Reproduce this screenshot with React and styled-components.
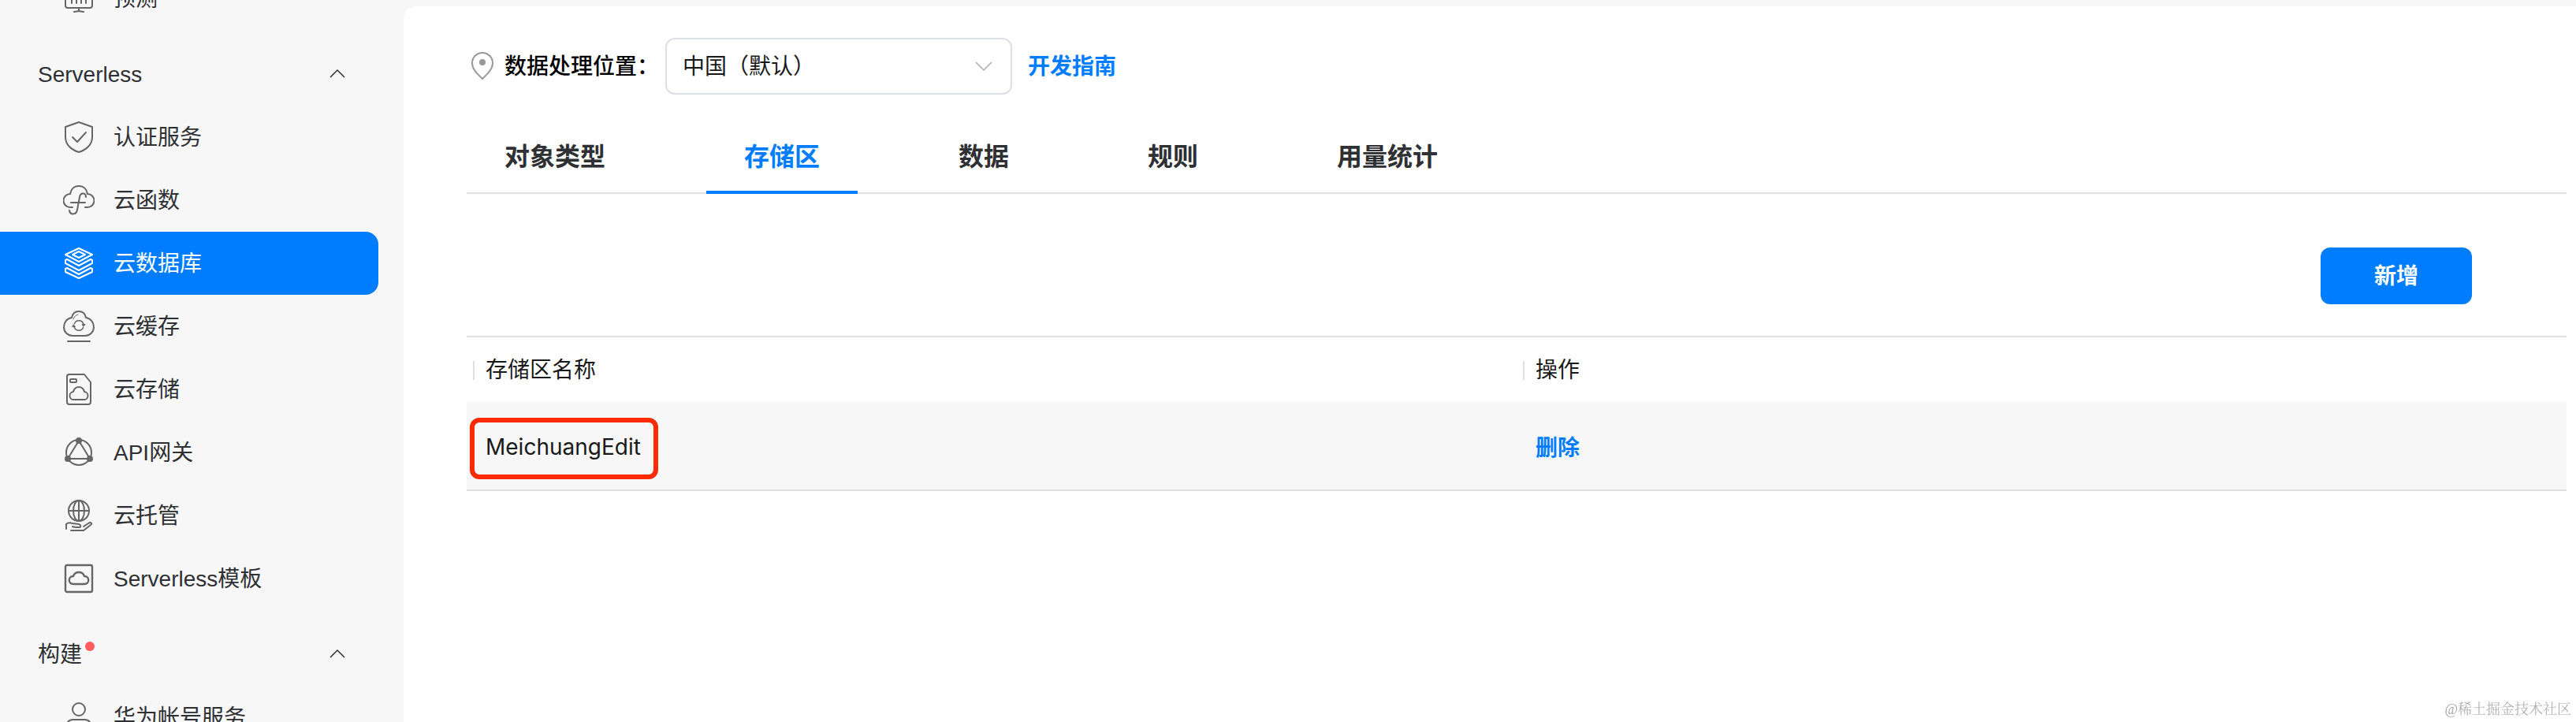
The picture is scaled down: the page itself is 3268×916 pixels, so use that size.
import React, { useState } from 'react';
import styled, { createGlobalStyle, css } from 'styled-components';

const GlobalStyle = createGlobalStyle`
  * {
    box-sizing: border-box;
  }

  body {
    margin: 0;
    background: #f7f7f7;
    color: #2e3033;
    font-family: 'Liberation Sans', 'Noto Sans CJK SC', sans-serif;
    font-size: 28px;
    line-height: 40px;
  }

  button,
  select {
    font: inherit;
    color: inherit;
  }
`;

const Layout = styled.div`
  display: flex;
  height: 100vh;
  overflow: hidden;
`;

const Sidebar = styled.aside`
  flex: none;
  width: 512px;
  padding-right: 32px;
  overflow: hidden;
`;

/* 메뉴가 조금 스크롤된 상태 */
const Menu = styled.nav`
  display: flex;
  flex-direction: column;
  gap: 16px;
  margin-top: -42px;
`;

const GroupTitle = styled.button`
  display: flex;
  align-items: center;
  width: 100%;
  height: 80px;
  padding: 0 40px 0 48px;
  border: none;
  background: transparent;
  text-align: left;
  cursor: pointer;

  svg {
    margin-left: auto;
  }
`;

const Dot = styled.span`
  align-self: flex-start;
  width: 12px;
  height: 12px;
  margin: 24px 0 0 4px;
  border-radius: 50%;
  background: #ff5c5c;
`;

const MenuList = styled.ul`
  margin: 0;
  padding: 0;
  list-style: none;
`;

const MenuText = styled.span`
  padding-top: 2px;
  white-space: nowrap;
`;

const MenuLink = styled.a`
  display: flex;
  align-items: center;
  gap: 24px;
  height: 80px;
  padding-left: 80px;
  border-radius: 0 16px 16px 0;
  color: #2e3033;
  text-decoration: none;

  svg {
    color: #666;
  }

  ${({ $active }) =>
    $active &&
    css`
      background: #007dff;
      color: #fff;

      svg {
        color: #fff;
      }
    `}
`;

const Content = styled.main`
  flex: 1;
  min-width: 0;
  margin-top: 8px;
  padding: 40px 12px 0 80px;
  border-top-left-radius: 16px;
  background: #fff;
`;

const LocationBar = styled.div`
  display: flex;
  align-items: center;
  height: 72px;
`;

const LocationLabel = styled.label`
  margin: 0 8px;
  padding-top: 2px;
  color: #000;
  font-weight: 500;
`;

const SelectBox = styled.div`
  display: grid;
  align-items: center;
  width: 440px;
  height: 72px;
  margin-right: 20px;

  > * {
    grid-area: 1 / 1;
  }

  svg {
    justify-self: end;
    margin-right: 24px;
    pointer-events: none;
  }
`;

const Select = styled.select`
  width: 100%;
  height: 100%;
  padding: 2px 64px 0 20px;
  border: 2px solid #dcdfe6;
  border-radius: 12px;
  background: #fff;
  color: #191919;
  appearance: none;
`;

const TextLink = styled.a`
  padding-top: 2px;
  color: #007dff;
  font-weight: 700;
  text-decoration: none;
`;

const Tabs = styled.div`
  display: flex;
  gap: 80px;
  margin-top: 32px;
  border-bottom: 2px solid #e0e0e0;
`;

const Tab = styled.button`
  height: 94px;
  margin-bottom: -2px;
  padding: 4px 48px 0;
  border: none;
  border-bottom: 4px solid ${({ $active }) => ($active ? '#007dff' : 'transparent')};
  background: transparent;
  color: ${({ $active }) => ($active ? '#007dff' : '#2e3033')};
  font-size: 32px;
  font-weight: 700;
  white-space: nowrap;
  cursor: pointer;
`;

const Toolbar = styled.div`
  display: flex;
  justify-content: flex-end;
  padding: 68px 120px 40px 0;
`;

const AddButton = styled.button`
  width: 192px;
  height: 72px;
  padding: 2px 0 0;
  border: none;
  border-radius: 12px;
  background: #007dff;
  color: #fff;
  font-weight: 700;
  cursor: pointer;
`;

const Table = styled.table`
  width: 100%;
  border-top: 2px solid #e0e0e0;
  border-bottom: 2px solid #e0e0e0;
  border-spacing: 0;
  table-layout: fixed;
  color: #191919;
`;

const HeadCell = styled.th`
  height: 82px;
  padding: 2px 8px 0;
  font-weight: 400;
  text-align: left;
`;

const HeadLabel = styled.div`
  display: flex;
  align-items: center;
  gap: 14px;

  &::before {
    content: '';
    width: 2px;
    height: 24px;
    background: #e0e0e0;
  }
`;

const Cell = styled.td`
  height: 111px;
  padding: 6px 24px 0;
  background: #f7f7f7;
`;

const Highlight = styled.span`
  display: inline-flex;
  align-items: center;
  height: 78px;
  margin-left: -20px;
  padding: 0 16px 4px 14px;
  border: 6px solid #ff2a00;
  border-radius: 12px;
  font-family: Inter, 'Noto Sans CJK SC', sans-serif;
`;

const Watermark = styled.div`
  position: fixed;
  right: 6px;
  bottom: 4px;
  color: #a8a8a8;
  font-family: 'Liberation Serif', 'Noto Serif CJK SC', 'Noto Sans CJK SC', serif;
  font-size: 18px;
  font-weight: 300;
  line-height: 24px;
`;

function Icon({ children, strokeWidth = 2 }) {
  return (
    <svg
      width="40"
      height="40"
      viewBox="0 0 40 40"
      fill="none"
      stroke="currentColor"
      strokeWidth={strokeWidth}
      strokeLinecap="round"
      strokeLinejoin="round"
      aria-hidden="true"
    >
      {children}
    </svg>
  );
}

const icons = {
  predict: (
    <Icon>
      <rect x="3" y="4" width="34" height="28" rx="3" />
      <path d="M11 15v11M17 12v14M23 17v9M29 13v13M20 32v4M14 37l6-1 6 1" />
    </Icon>
  ),
  auth: (
    <Icon>
      <path d="M20 1l17 6v13c0 9-7 16-17 19C10 36 3 29 3 20V7z" />
      <path d="M12 20l6 6 11-12" />
    </Icon>
  ),
  func: (
    <Icon>
      <path d="M12 29H9A8.500 8.500 0 0 1 9 12c1-6 5-10 11-10s10 4 11 10a8.500 8.500 0 0 1 0 17h-3" />
      <path d="M10 23h18M29 16c0-6-7-6-8 0l-3 16c-1 7-9 7-10 1" />
    </Icon>
  ),
  database: (
    <Icon>
      <path d="M20 1l17 8-17 9L3 9z" />
      <path d="M20 5l8 4-8 4-8-4z" />
      <path d="M3 16l2-1 15 8 15-8 2 1v4l-17 9-17-9z" />
      <path d="M3 27l2-1 15 8 15-8 2 1v4l-17 8-17-8z" />
    </Icon>
  ),
  cache: (
    <Icon>
      <path d="M12 32C6 32 1 27 1 21S5 10 11 9c1-5 4-8 9-8s8 3 9 8c6 1 10 6 10 12s-5 11-11 11z" />
      <path d="M6 39h28" />
      <path strokeWidth="1" d="M13 11c1-3 3-5 6-6" />
      <path strokeWidth="1.6" d="M14.500 16.500a6 6 0 0 1 11.500 1.500M25.500 21.500a6 6 0 0 1-11.500-1.500" />
      <path strokeWidth="1" fill="currentColor" d="M24.500 17.500h3.500l-2 2.500zM12 20.500h3.500l-2-2.500z" />
    </Icon>
  ),
  storage: (
    <Icon>
      <path d="M8 1h19l8 10v25a3 3 0 0 1-3 3H8a3 3 0 0 1-3-3V4a3 3 0 0 1 3-3z" />
      <rect x="9" y="7" width="8" height="4" rx="1" />
      <path d="M14 33a5 5 0 0 1-1-10c1-4 3-6 7-6s6 2 7 6a5 5 0 0 1-1 10z" />
    </Icon>
  ),
  gateway: (
    <Icon>
      <circle cx="20" cy="20" r="16" />
      <path d="M20 5L6 28h28z" />
      <g fill="currentColor">
        <circle cx="20" cy="5" r="3" />
        <circle cx="6" cy="28" r="3" />
        <circle cx="34" cy="28" r="3" />
      </g>
    </Icon>
  ),
  hosting: (
    <Icon>
      <circle cx="20" cy="14" r="13" />
      <ellipse cx="20" cy="14" rx="7" ry="13" />
      <path d="M20 1v26M7 14h26" />
      <path d="M4 37v-6c2-2 5-2 8-1l8 1c3 1 3 4 0 4-3 0-6 0-8-1M10 39h16l9-7c3-2 0-4-3-2l-6 4" />
    </Icon>
  ),
  template: (
    <Icon strokeWidth={2.4}>
      <rect x="3" y="3" width="34" height="34" rx="2" />
      <path d="M13 27c-7 0-7-10 0-10 1-3 3-5 7-5s6 2 7 5c7 0 7 10 0 10z" />
    </Icon>
  ),
  account: (
    <Icon>
      <circle cx="20" cy="10" r="8" />
      <path d="M5 38V31c0-5 3-8 8-8h14c5 0 8 3 8 8v7z" />
    </Icon>
  ),
};

function ArrowUp() {
  return (
    <svg width="24" height="24" viewBox="0 0 24 24" fill="none" stroke="#2e3033" strokeWidth="1.5">
      <path d="M3 16l9-9 9 9" />
    </svg>
  );
}

function ArrowDown() {
  return (
    <svg width="24" height="24" viewBox="0 0 24 24" fill="none" stroke="#a8abb2" strokeWidth="1.5">
      <path d="M2 7l10 10L22 7" />
    </svg>
  );
}

function PinIcon() {
  return (
    <svg width="40" height="40" viewBox="0 0 40 40" fill="none" stroke="#999" strokeWidth="2">
      <path d="M20 36C14 30 7 24 7 16a13 13 0 0 1 26 0c0 8-7 14-13 20z" />
      <circle cx="20" cy="15" r="4" fill="#999" stroke="none" />
    </svg>
  );
}

const groups = [
  { items: [{ icon: 'predict', name: '预测' }] },
  {
    title: 'Serverless',
    items: [
      { icon: 'auth', name: '认证服务' },
      { icon: 'func', name: '云函数' },
      { icon: 'database', name: '云数据库' },
      { icon: 'cache', name: '云缓存' },
      { icon: 'storage', name: '云存储' },
      { icon: 'gateway', name: 'API网关' },
      { icon: 'hosting', name: '云托管' },
      { icon: 'template', name: 'Serverless模板' },
    ],
  },
  {
    title: '构建',
    isNew: true,
    items: [{ icon: 'account', name: '华为帐号服务' }],
  },
];

const tabs = ['对象类型', '存储区', '数据', '规则', '用量统计'];

function App() {
  const [menu, setMenu] = useState('云数据库');
  const [tab, setTab] = useState('存储区');

  return (
    <>
      <GlobalStyle />
      <Layout>
        <Sidebar>
          <Menu>
            {groups.map((group, i) => (
              <div key={i}>
                {group.title && (
                  <GroupTitle type="button">
                    <MenuText>{group.title}</MenuText>
                    {group.isNew && <Dot />}
                    <ArrowUp />
                  </GroupTitle>
                )}
                <MenuList>
                  {group.items.map((item) => (
                    <li key={item.name}>
                      <MenuLink
                        href="#"
                        $active={menu === item.name}
                        onClick={() => setMenu(item.name)}
                      >
                        {icons[item.icon]}
                        <MenuText>{item.name}</MenuText>
                      </MenuLink>
                    </li>
                  ))}
                </MenuList>
              </div>
            ))}
          </Menu>
        </Sidebar>

        <Content>
          <LocationBar>
            <PinIcon />
            <LocationLabel htmlFor="location">数据处理位置：</LocationLabel>
            <SelectBox>
              <Select id="location">
                <option>中国（默认）</option>
              </Select>
              <ArrowDown />
            </SelectBox>
            <TextLink href="#">开发指南</TextLink>
          </LocationBar>

          <Tabs role="tablist">
            {tabs.map((name) => (
              <Tab
                key={name}
                type="button"
                role="tab"
                aria-selected={tab === name}
                $active={tab === name}
                onClick={() => setTab(name)}
              >
                {name}
              </Tab>
            ))}
          </Tabs>

          <Toolbar>
            <AddButton type="button">新增</AddButton>
          </Toolbar>

          <Table>
            <thead>
              <tr>
                <HeadCell>
                  <HeadLabel>存储区名称</HeadLabel>
                </HeadCell>
                <HeadCell>
                  <HeadLabel>操作</HeadLabel>
                </HeadCell>
              </tr>
            </thead>
            <tbody>
              <tr>
                <Cell>
                  <Highlight>MeichuangEdit</Highlight>
                </Cell>
                <Cell>
                  <TextLink href="#">删除</TextLink>
                </Cell>
              </tr>
            </tbody>
          </Table>
        </Content>
      </Layout>
      <Watermark>@稀土掘金技术社区</Watermark>
    </>
  );
}

export default App;
